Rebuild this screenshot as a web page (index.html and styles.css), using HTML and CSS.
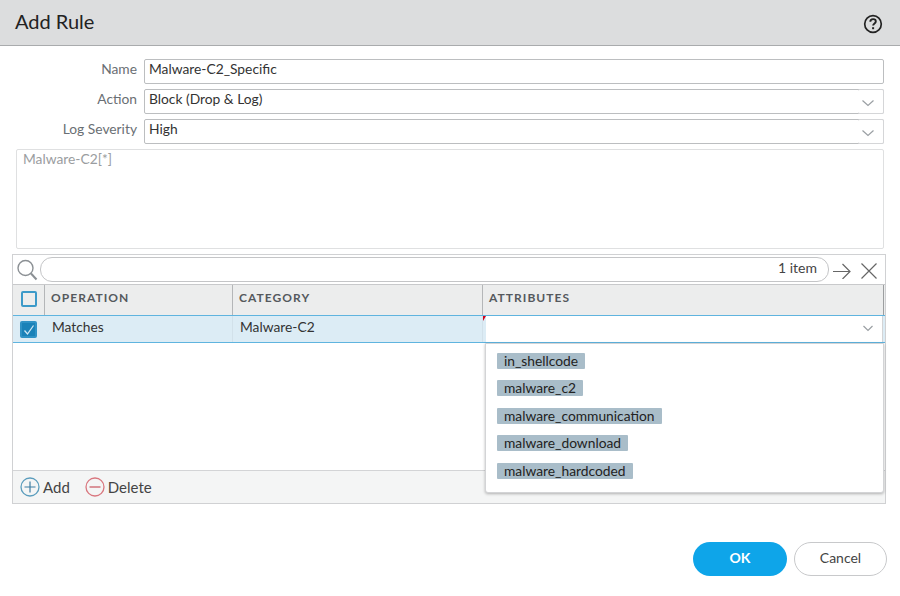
FILE: index.html
```html
<!DOCTYPE html>
<html lang="en">
<head>
<meta charset="utf-8">
<title>Add Rule</title>
<link rel="stylesheet" href="styles.css">
</head>
<body>
<div class="dialog">
  <header class="head">
    <h1>Add Rule</h1>
    <svg class="help" width="20" height="20" viewBox="0 0 20 20"><circle cx="10" cy="10" r="8.300" fill="none" stroke="#222" stroke-width="1.700"/><path d="M7.300 7.800c0-1.700 1.200-2.700 2.800-2.700s2.700 1 2.700 2.300c0 2-2.700 2-2.700 4.200" fill="none" stroke="#222" stroke-width="1.900"/><rect x="9.100" y="13.200" width="2" height="2" fill="#222"/></svg>
  </header>
  <section class="form">
    <div class="row"><label>Name</label><div class="input">Malware-C2_Specific</div></div>
    <div class="row"><label>Action</label><div class="input select">Block (Drop &amp; Log)<span class="trigger"><svg width="14" height="8" viewBox="0 0 14 8"><path d="M1.500 1.500 7 6.500 12.500 1.500" fill="none" stroke="#9a9fa3" stroke-width="1.200"/></svg></span></div></div>
    <div class="row"><label>Log Severity</label><div class="input select">High<span class="trigger"><svg width="14" height="8" viewBox="0 0 14 8"><path d="M1.500 1.500 7 6.500 12.500 1.500" fill="none" stroke="#9a9fa3" stroke-width="1.200"/></svg></span></div></div>
    <div class="textarea">Malware-C2[*]</div>
  </section>
  <section class="grid">
    <div class="toolbar">
      <svg class="search" width="24" height="24" viewBox="0 0 24 24"><circle cx="10.500" cy="10" r="7.500" fill="none" stroke="#8b9094" stroke-width="1.400"/><path d="M16 15.500 21.500 21.500" stroke="#8b9094" stroke-width="2"/></svg>
      <div class="filter">1 item</div>
      <svg class="tool" width="20" height="16" viewBox="0 0 20 16"><path d="M1 8.500H18M10.500 1 18 8.500 10.500 16" fill="none" stroke="#666" stroke-width="1.200"/></svg>
      <svg class="tool" width="18" height="18" viewBox="0 0 18 18"><path d="M1.500 1.500 16.500 16.500M16.500 1.500 1.500 16.500" fill="none" stroke="#666" stroke-width="1.200"/></svg>
    </div>
    <div class="columns">
      <div class="check-col"><span class="box"></span></div>
      <div class="col op">OPERATION</div>
      <div class="col cat">CATEGORY</div>
      <div class="col attr">ATTRIBUTES</div>
    </div>
    <div class="data-row">
      <div class="check-col check-cell"><span class="box checked"><svg width="16" height="16" viewBox="0 0 16 16"><path d="M3.500 8.500 6.500 12 12.500 3.500" fill="none" stroke="#cfe6f3" stroke-width="1.300"/></svg></span></div>
      <div class="cell op">Matches</div>
      <div class="cell cat">Malware-C2</div>
      <div class="cell attr"><span class="dirty"></span></div>
    </div>
    <div class="blank"></div>
    <div class="actions">
      <span class="action"><svg width="20" height="20" viewBox="0 0 20 20"><circle cx="10" cy="10" r="9" fill="none" stroke="#5b9dbd" stroke-width="1.300"/><path d="M10 4.500V15.500M4.500 10H15.500" stroke="#3d7ea3" stroke-width="1.200"/></svg>Add</span>
      <span class="action"><svg width="20" height="20" viewBox="0 0 20 20"><circle cx="10" cy="10" r="9" fill="none" stroke="#d9777f" stroke-width="1.300"/><path d="M4.500 10H15.500" stroke="#c9545e" stroke-width="1.200"/></svg>Delete</span>
    </div>
    <div class="editor"><svg width="12" height="7" viewBox="0 0 12 7"><path d="M1.500 1 6 5.500 10.500 1" fill="none" stroke="#9a9fa3" stroke-width="1.200"/></svg></div>
    <ul class="menu">
      <li><span class="tag">in_shellcode</span></li>
      <li><span class="tag">malware_c2</span></li>
      <li><span class="tag">malware_communication</span></li>
      <li><span class="tag">malware_download</span></li>
      <li><span class="tag">malware_hardcoded</span></li>
    </ul>
  </section>
  <footer class="buttons">
    <button class="btn ok">OK</button>
    <button class="btn cancel">Cancel</button>
  </footer>
</div>
</body>
</html>
```
FILE: styles.css
```css
* { box-sizing: border-box; }
html, body { margin: 0; padding: 0; }
body { width: 900px; height: 596px; overflow: hidden; background: #fff; font: 13.800px/17px Lato, "Open Sans", sans-serif; color: #333; font-variant-ligatures: common-ligatures; text-rendering: optimizeLegibility; }
.dialog { width: 900px; height: 596px; display: flex; flex-direction: column; }
.head { height: 46px; flex: none; background: #dcddde; border-bottom: 1px solid #a9abad; display: flex; align-items: center; justify-content: space-between; padding: 0 17px 0 15px; }
.head h1 { margin: -3px 0 0; font-size: 20px; font-weight: 400; line-height: 24px; color: #222; }
.help { display: block; margin-top: 2px; }
.form { padding: 13px 16px 0 16px; display: flex; flex-direction: column; }
.row { display: flex; align-items: flex-start; height: 30px; }
.row label { width: 121px; margin-right: 7px; text-align: right; color: #6a6f74; line-height: 20px; flex: none; }
.input { position: relative; flex: 1; height: 25px; border: 1px solid #bcbec0; border-radius: 2px; padding: 0 4px; line-height: 17px; color: #333; }
.trigger { position: absolute; right: -1px; top: -1px; width: 26px; height: 25px; border: 1px solid #d5d6d8; border-left: 0; border-radius: 2px; display: flex; align-items: center; justify-content: center; background: #fff; padding-right: 5px; }
.trigger svg { margin-top: 3px; }
.textarea { height: 100px; border: 1px solid #dfe0e1; border-radius: 2px; padding: 0 6px; color: #9a9da0; }
.grid { position: relative; margin: 5px 14px 0 12px; height: 250px; border: 1px solid #d0d1d3; display: flex; flex-direction: column; }
.toolbar { height: 30px; flex: none; display: flex; align-items: center; border-bottom: 1px solid #c8c9cb; padding: 0 8px 0 2px; }
.search { flex: none; }
.filter { flex: none; width: 789px; height: 25px; margin: -1px 0 0 1px; border: 1px solid #c4c5c7; border-radius: 12px; text-align: right; padding: 1px 11px 0 0; color: #444; font-size: 14px; }
.tool { flex: none; margin: 3px 0 0 3px; }
.tool + .tool { margin-left: 8px; }
.columns { height: 31px; flex: none; display: flex; background: #eceded; border-bottom: 1px solid #b9babc; }
.check-col { width: 32px; flex: none; display: flex; align-items: center; justify-content: center; }
.columns .check-col { border-right: 1px solid #b4b6b8; padding-bottom: 2px; }
.check-cell { padding-right: 2px; }
.box { display: block; width: 16px; height: 16px; border: 2px solid #3c9ac9; border-radius: 2px; background: #eceded; }
.box.checked { background: #1a82b8; border-color: #2f92c5; width: 17px; height: 17px; }
.box svg { display: block; margin: -1px 0 0 -1px; }
.col { padding-left: 6px; font-size: 12px; font-weight: 700; letter-spacing: 1.050px; color: #55595d; line-height: 26px; border-right: 1px solid #b4b6b8; }
.op { width: 188px; flex: none; }
.cat { width: 250px; flex: none; }
.attr { flex: 1; }
.columns .attr { border-right: 1px solid #9c9ea0; margin-right: 1px; }
.data-row { position: relative; height: 28px; flex: none; display: flex; background: #dcecf5; border-top: 1px solid #5fb4df; border-bottom: 1px solid #5fb4df; margin-top: -1px; }
.cell { padding-left: 7px; line-height: 22px; color: #333; border-right: 1px solid #d2e1ea; }
.cell.attr { border-right: 0; position: relative; padding: 0; }
.dirty { position: absolute; left: 0; top: 0; border-top: 5px solid #d0021b; border-right: 3px solid transparent; }
.blank { flex: 1; }
.actions { height: 33px; flex: none; background: #f4f5f5; border-top: 1px solid #d3d4d6; display: flex; align-items: center; gap: 15px; padding: 0 0 0 7px; color: #444; font-size: 15px; }
.action { display: flex; align-items: center; gap: 3px; line-height: 20px; }
.editor { position: absolute; left: 473px; top: 61px; width: 397px; height: 26px; background: #fff; border-right: 1px solid #d3d4d6; display: flex; align-items: center; justify-content: flex-end; padding: 0 8px 2px 0; }
.menu { list-style: none; margin: 0; padding: 3px 0 0 11px; position: absolute; left: 472px; top: 88px; width: 399px; height: 150px; background: #fff; border: 1px solid #d3d4d6; border-radius: 0 0 3px 3px; box-shadow: 0 1px 3px rgba(0,0,0,.28); }
.menu li { height: 27.500px; display: flex; align-items: center; }
.tag { display: block; height: 16px; line-height: 15px; background: #a9bdc9; border-radius: 1px; padding: 0 7px; color: #222; }
.buttons { display: flex; justify-content: flex-end; gap: 7px; padding: 38px 13px 0 0; }
.btn { height: 34px; border-radius: 17px; font: 14px/17px Lato, "Open Sans", sans-serif; padding: 0 0 4px; }
.ok { width: 94px; background: #0ea5e9; border: 0; color: #fff; font-weight: 700; }
.cancel { width: 93px; background: #fff; border: 1px solid #c8c9cb; color: #444; }
```
